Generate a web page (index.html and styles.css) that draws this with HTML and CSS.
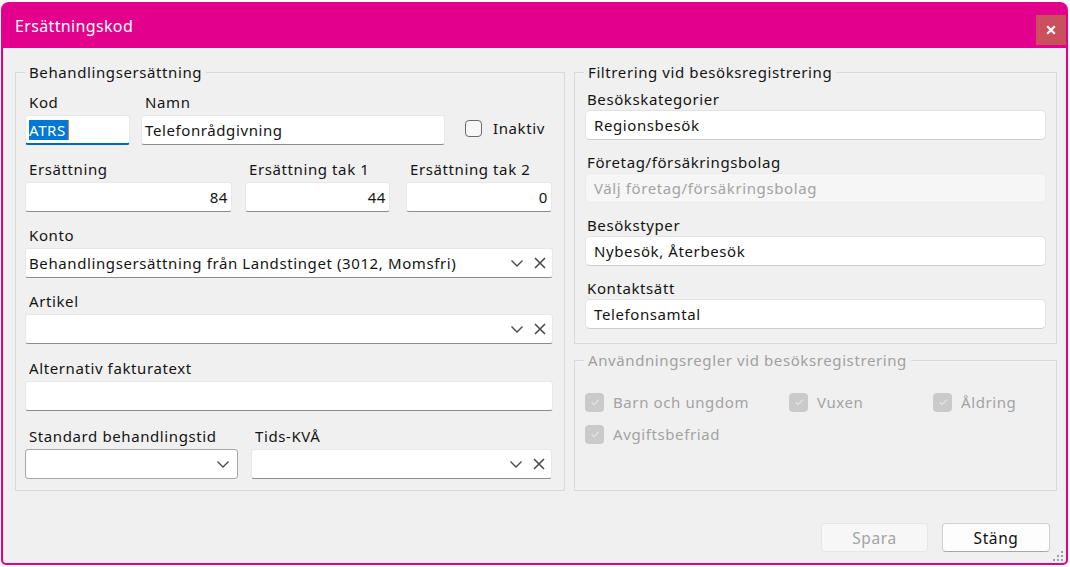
FILE: index.html
```html
<!DOCTYPE html>
<html lang="sv">
<head>
<meta charset="utf-8">
<title>Ersättningskod</title>
<link rel="stylesheet" href="styles.css">
</head>
<body>
<div class="window">
  <div class="titlebar">
    <span class="title">Ersättningskod</span>
    <div class="close">
      <svg width="10" height="10" viewBox="0 0 10 10"><path d="M2 2 L8 8 M8 2 L2 8" stroke="#fff" stroke-width="2.2" stroke-linecap="square"/></svg>
    </div>
  </div>
  <div class="content">
    <div class="columns">
      <fieldset class="group left">
        <legend>Behandlingsersättning</legend>
        <div class="rows">
          <div class="row first">
            <div class="field w-kod"><label>Kod</label><div class="input focused"><span class="sel">ATRS</span></div></div>
            <div class="field w-namn"><label>Namn</label><div class="input">Telefonrådgivning</div></div>
            <div class="check"><span class="box"></span><span>Inaktiv</span></div>
          </div>
          <div class="row">
            <div class="field w-ers"><label>Ersättning</label><div class="input num">84</div></div>
            <div class="field w-tak1"><label>Ersättning tak 1</label><div class="input num">44</div></div>
            <div class="field w-tak2"><label>Ersättning tak 2</label><div class="input num">0</div></div>
          </div>
          <div class="field"><label>Konto</label>
            <div class="input combo"><span class="val">Behandlingsersättning från Landstinget (3012, Momsfri)</span>
              <svg class="chev" width="14" height="14" viewBox="0 0 14 14"><path d="M1.5 4.5 L7 10 L12.5 4.5" fill="none" stroke="#4a4a4a" stroke-width="1.4"/></svg>
              <svg class="clr" width="14" height="14" viewBox="0 0 14 14"><path d="M2 2 L12 12 M12 2 L2 12" fill="none" stroke="#4a4a4a" stroke-width="1.6"/></svg>
            </div>
          </div>
          <div class="field"><label>Artikel</label>
            <div class="input combo"><span class="val"></span>
              <svg class="chev" width="14" height="14" viewBox="0 0 14 14"><path d="M1.5 4.5 L7 10 L12.5 4.5" fill="none" stroke="#4a4a4a" stroke-width="1.4"/></svg>
              <svg class="clr" width="14" height="14" viewBox="0 0 14 14"><path d="M2 2 L12 12 M12 2 L2 12" fill="none" stroke="#4a4a4a" stroke-width="1.6"/></svg>
            </div>
          </div>
          <div class="field alt"><label>Alternativ fakturatext</label><div class="input"></div></div>
          <div class="row last">
            <div class="field w-std"><label>Standard behandlingstid</label>
              <div class="input select"><span class="val"></span>
                <svg class="chev" width="14" height="14" viewBox="0 0 14 14"><path d="M1.5 4.5 L7 10 L12.5 4.5" fill="none" stroke="#4a4a4a" stroke-width="1.3"/></svg>
              </div>
            </div>
            <div class="field w-kva"><label>Tids-KVÅ</label>
              <div class="input combo"><span class="val"></span>
                <svg class="chev" width="14" height="14" viewBox="0 0 14 14"><path d="M1.5 4.5 L7 10 L12.5 4.5" fill="none" stroke="#4a4a4a" stroke-width="1.4"/></svg>
                <svg class="clr" width="14" height="14" viewBox="0 0 14 14"><path d="M2 2 L12 12 M12 2 L2 12" fill="none" stroke="#4a4a4a" stroke-width="1.6"/></svg>
              </div>
            </div>
          </div>
        </div>
      </fieldset>
      <div class="rightcol">
        <fieldset class="group filt">
          <legend>Filtrering vid besöksregistrering</legend>
          <div class="rrows">
            <div class="rfield"><label>Besökskategorier</label><div class="rinput">Regionsbesök</div></div>
            <div class="rfield"><label>Företag/försäkringsbolag</label><div class="rinput disabled">Välj företag/försäkringsbolag</div></div>
            <div class="rfield"><label>Besökstyper</label><div class="rinput">Nybesök, Återbesök</div></div>
            <div class="rfield"><label>Kontaktsätt</label><div class="rinput">Telefonsamtal</div></div>
          </div>
        </fieldset>
        <fieldset class="group rules">
          <legend>Användningsregler vid besöksregistrering</legend>
          <div class="checks">
            <div class="dcheck"><span class="dbox"><svg width="12" height="12" viewBox="0 0 12 12"><path d="M2.5 6.2 L5 8.6 L9.8 3.6" fill="none" stroke="#e4e4e4" stroke-width="1.3"/></svg></span>Barn och ungdom</div>
            <div class="dcheck"><span class="dbox"><svg width="12" height="12" viewBox="0 0 12 12"><path d="M2.5 6.2 L5 8.6 L9.8 3.6" fill="none" stroke="#e4e4e4" stroke-width="1.3"/></svg></span>Vuxen</div>
            <div class="dcheck"><span class="dbox"><svg width="12" height="12" viewBox="0 0 12 12"><path d="M2.5 6.2 L5 8.6 L9.8 3.6" fill="none" stroke="#e4e4e4" stroke-width="1.3"/></svg></span>Åldring</div>
            <div class="dcheck"><span class="dbox"><svg width="12" height="12" viewBox="0 0 12 12"><path d="M2.5 6.2 L5 8.6 L9.8 3.6" fill="none" stroke="#e4e4e4" stroke-width="1.3"/></svg></span>Avgiftsbefriad</div>
          </div>
        </fieldset>
      </div>
    </div>
    <div class="footer">
      <div class="btn disabled">Spara</div>
      <div class="btn">Stäng</div>
    </div>
    <svg class="grip" width="12" height="12" viewBox="0 0 12 12">
      <rect x="9" y="1" width="2" height="2" fill="#a0a0a0"/>
      <rect x="5" y="5" width="2" height="2" fill="#a0a0a0"/>
      <rect x="9" y="5" width="2" height="2" fill="#a0a0a0"/>
      <rect x="1" y="9" width="2" height="2" fill="#a0a0a0"/>
      <rect x="5" y="9" width="2" height="2" fill="#a0a0a0"/>
      <rect x="9" y="9" width="2" height="2" fill="#a0a0a0"/>
    </svg>
  </div>
</div>
</body>
</html>
```
FILE: styles.css
```css
* { box-sizing: border-box; }
html, body { margin: 0; padding: 0; background: #ffffff; }
body {
  font-family: "Noto Sans", "Open Sans", sans-serif;
  font-size: 15px;
  letter-spacing: 0.6px;
  color: #141414;
  width: 1070px;
  height: 567px;
  overflow: hidden;
}
.window {
  margin: 2px 0 0 1px;
  width: 1067px;
  height: 563px;
  background: #e3008c;
  border-radius: 8px 8px 5px 5px;
  padding: 0 2px 2px 2px;
  display: flex;
  flex-direction: column;
}
.titlebar {
  height: 46px;
  display: flex;
  align-items: center;
  padding-left: 12px;
  position: relative;
}
.title {
  color: #ffffff;
  font-size: 16px;
  letter-spacing: 0.35px;
  margin-top: 2px;
}
.close {
  margin-left: auto;
  align-self: flex-start;
  margin-top: 13px;
  width: 30px;
  height: 30px;
  background: #c9505c;
  display: flex;
  align-items: center;
  justify-content: center;
}
.content {
  flex: 1;
  background: #f0f0f0;
  padding: 14px 9px 11px 12px;
  display: flex;
  flex-direction: column;
  position: relative;
  border-radius: 0 0 3px 3px;
}
.columns {
  display: flex;
  gap: 9px;
  height: 429px;
}
fieldset.group {
  margin: 0;
  border: 1px solid #d9d9d9;
  min-width: 0;
}
fieldset.group legend {
  padding: 0 4px;
  height: 20px;
  line-height: 20px;
}
.left {
  width: 550px;
  padding: 10px 11px 0 9px;
}
.rows {
  display: flex;
  flex-direction: column;
  gap: 13px;
}
.row {
  display: flex;
  align-items: flex-end;
}
.row.first { margin-bottom: 1px; }
.alt { margin-top: 1px; }
.row.last { margin-top: 2px; }
.field {
  display: flex;
  flex-direction: column;
}
.field label {
  height: 20px;
  line-height: 20px;
  margin-bottom: 3px;
  padding-left: 4px;
}
.w-kod { width: 105px; }
.w-namn { width: 304px; margin-left: 11px; }
.w-ers { width: 207px; }
.w-tak1 { width: 145px; margin-left: 13px; }
.w-tak2 { width: 146px; margin-left: 16px; }
.w-std { width: 213px; }
.w-kva { width: 301px; margin-left: 13px; }
.input {
  height: 30px;
  background: #ffffff;
  border: 1px solid #e8e8e8;
  border-bottom: 1px solid #8c8c8c;
  border-radius: 3px;
  padding: 0 3px;
  display: flex;
  align-items: center;
  white-space: nowrap;
  overflow: hidden;
}
.input.focused {
  border-bottom: 2px solid #0067c0;
  padding-top: 1px;
}
.sel {
  background: #0078d7;
  color: #ffffff;
  padding-right: 2px;
  border-right: 1px solid #e87e2a;
}
.input.num { justify-content: flex-end; }
.combo .val, .select .val { flex: 1; overflow: hidden; }
.combo .chev { margin-right: 9px; flex: none; }
.combo .clr { margin-right: 2px; flex: none; }
.select {
  border: 1px solid #a8a8a8;
  border-radius: 3px;
}
.select .chev { margin-right: 4px; }
.check {
  display: flex;
  align-items: center;
  height: 30px;
  margin-left: 20px;
  margin-bottom: 2px;
}
.check .box {
  width: 17px;
  height: 17px;
  border: 1px solid #6a6a6a;
  border-radius: 4px;
  background: #f7f7f7;
  margin-right: 11px;
}
.rightcol {
  flex: 1;
  display: flex;
  flex-direction: column;
}
.filt {
  height: 282px;
  padding: 7px 10px 0 10px;
}
.filt legend { margin-left: -1px; }
.rrows {
  display: flex;
  flex-direction: column;
  gap: 12px;
}
.rfield { display: flex; flex-direction: column; }
.rfield label {
  height: 20px;
  line-height: 20px;
  margin-bottom: 1px;
  padding-left: 2px;
}
.rinput {
  height: 30px;
  background: #ffffff;
  border: 1px solid #e2e2e2;
  border-bottom-color: #cdcdcd;
  border-radius: 5px;
  padding: 0 8px;
  display: flex;
  align-items: center;
}
.rinput.disabled {
  background: #f6f6f6;
  border-color: #ebebeb;
  color: #a3a3a3;
}
.rules {
  margin-top: 6px !important;
  flex: 1;
  padding: 16px 10px 0 10px;
}
.rules legend { color: #a0a0a0; margin-left: -1px; }
.checks {
  display: grid;
  grid-template-columns: 204px 144px 1fr;
  grid-auto-rows: 32px;
}
.dcheck {
  display: flex;
  align-items: center;
  color: #a3a3a3;
}
.dbox {
  width: 19px;
  height: 19px;
  border-radius: 4px;
  background: #cacaca;
  margin-right: 9px;
  display: flex;
  align-items: center;
  justify-content: center;
  flex: none;
}
.footer {
  margin-top: 32px;
  margin-right: 7px;
  display: flex;
  justify-content: flex-end;
  gap: 14px;
}
.btn {
  width: 108px;
  height: 29px;
  background: #fdfdfd;
  border: 1px solid #d0d0d0;
  border-bottom-color: #a8a8a8;
  border-radius: 4px;
  display: flex;
  align-items: center;
  justify-content: center;
  font-size: 15.5px;
  color: #111;
}
.btn.disabled {
  width: 107px;
  background: #f7f7f7;
  border-color: #e6e6e6;
  color: #a3a3a3;
}
.grip {
  position: absolute;
  right: 2px;
  bottom: 1px;
}
```
